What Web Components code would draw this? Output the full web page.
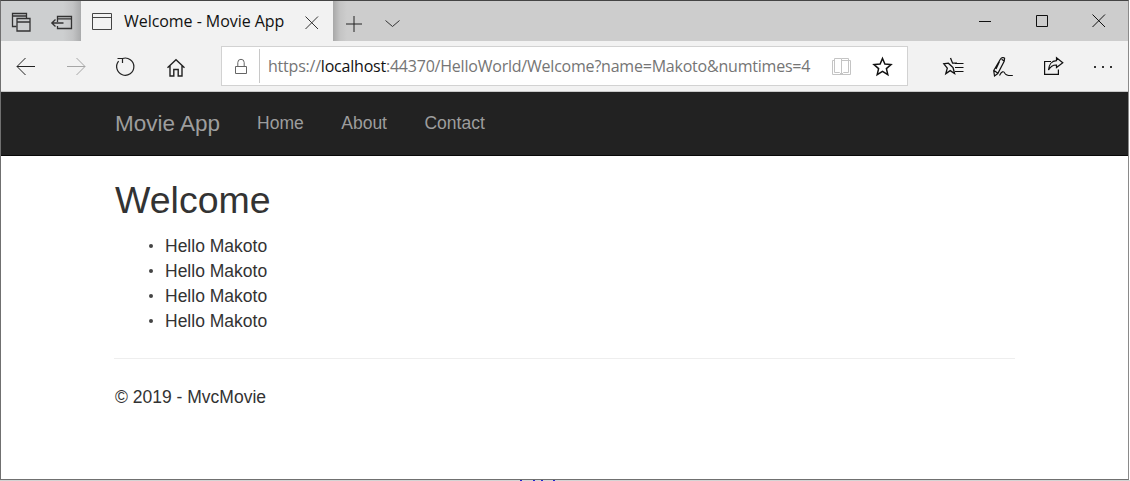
<!DOCTYPE html>
<html lang="en"><head><meta charset="utf-8"><title>Welcome - Movie App</title>
<style>
html,body{margin:0;padding:0;background:#fff;overflow:hidden}
body{width:1130px;height:481px;font-family:"Liberation Sans",Arial,sans-serif}
</style></head><body>
<browser-window>
  <tab-strip title-text="Welcome - Movie App"></tab-strip>
  <nav-toolbar url-a="https://" url-b="localhost" url-c=":44370/HelloWorld/Welcome?name=Makoto&amp;numtimes=4"></nav-toolbar>
  <site-navbar brand="Movie App">
    <nav-link>Home</nav-link><nav-link>About</nav-link><nav-link>Contact</nav-link>
  </site-navbar>
  <page-body>
    <span slot="heading">Welcome</span>
    <bullet-item>Hello Makoto</bullet-item><bullet-item>Hello Makoto</bullet-item><bullet-item>Hello Makoto</bullet-item><bullet-item>Hello Makoto</bullet-item>
    <span slot="footer">© 2019 - MvcMovie</span>
  </page-body>
</browser-window>
<script>
const ICONS={
 stack:'<path d="M4.5 13.5H.5V.5H14.5V5M.5 3H14.5"/><path d="M5 5.5H18V18H5ZM5 9H18"/>',
 backtab:'<path d="M6.5 6V.5H20.5V12.5H6.5V10M6.5 2.8H20.5"/><path d="M.8 7H12.5M4.5 3.5L.8 7L4.5 10.5"/>',
 tabpage:'<path d="M.5.5H19.5V16.5H.5ZM.5 4.5H19.5"/>',
 close:'<path d="M.5.5L13 13M13 .5L.5 13"/>',
 plus:'<path d="M8 0V16M0 8H16"/>',
 chev:'<path d="M.5.5L7.5 6.5L14.5.5"/>',
 min:'<path d="M0 .5H12"/>',
 max:'<path d="M.5.5H11.5V11.5H.5Z"/>',
 back:'<path d="M19 9.5H1M9.5 1L1 9.5L9.5 18"/>',
 refresh:'<path d="M5.5 .5A8.6 8.6 0 1 1 1.6 3.2" stroke-width="1.2"/><path d="M.5 .5H5.5V5" stroke-width="1.2"/>',
 home:'<path d="M.5 8.7L9 .7L17.5 8.7M3 6.8V17H6.8V10.5H11.2V17H15V6.8" stroke-width="1.4"/>',
 lock:'<path d="M2.8 7V3.5A3.2 3.2 0 0 1 9.2 3.5V7M.5 7.5H11.5V14.5H.5Z"/>',
 book:'<path d="M.5 2.5H2.5V.5H9.5V16.5H.5ZM9.5 2.5H18.5V16.5H9.5M16.5.5H9.5M16.5.5V14.5H11.5L9.5 16.5M2.5 2V14.5H7.5L9.5 16.5"/>',
 star:'<path d="M9.5 1.5L11.9 7.1L18 7.6L13.4 11.6L14.8 17.6L9.5 14.4L4.2 17.6L5.6 11.6L1 7.6L7.1 7.1Z" stroke-width="1.5"/>',
 favs:'<path d="M7.5 1L9.6 6.2H14M10 10.5L11.6 16.6L7.2 13.6L2.8 16.6L4.3 11.2L.8 6.8L5.4 6.2Z" stroke-width="1.3"/><path d="M12 6.5H20.5M12 10.5H20.5M12 14.5H20.5" stroke-width="1.2"/>',
 pen:'<path d="M1.5 19L.7 13.5L7.5 2C8.6 .4 10.6 .2 11.6 1.2L11.2 4.2L4.8 16.5ZM1 13.6L4.6 16M8.6 2.2L10.8 3.8M6.5 4.5L3 12" stroke-width="1.2"/><path d="M6.5 18.4C8.5 14.5 10.5 13.5 12 16.5C13.5 19 15.5 18.5 19.8 18.5" stroke-width="1.1"/>',
 share:'<path d="M7 4.5H.6V17.4H14.4V12.5" stroke-width="1.2"/><path d="M12.5 .8L18.8 5.8L12.5 10.6V8C9 7.8 6.5 9.5 4.5 13C4.8 8 7.5 3.8 12.5 3.6Z" stroke-width="1.2"/>'
};
const SIZES={stack:[18.5,18.5,18.5,18.5],backtab:[21,13,21,13],tabpage:[20,17,20,17],close:[14,14,14,14],plus:[16,16,16,16],chev:[15,7,15,7],min:[12,1,12,1],max:[12,12,12,12],back:[20,19,20,19],refresh:[18,19,18,19],home:[18,18,18,18],lock:[12,15,12,15],book:[19,17,19,17],star:[19,19,19,19],favs:[21,18,21,18],pen:[20,20,20,20],share:[19,18,19,18]};
class UiIcon extends HTMLElement{
 connectedCallback(){
  const n=this.getAttribute('name'),[vw,vh,w,h]=SIZES[n];
  const c=this.getAttribute('color')||'#111';
  const r=this.attachShadow({mode:'open'});
  r.innerHTML=`<style>:host{display:flex;align-items:center;justify-content:center}svg{display:block;overflow:visible}</style><svg width="${w}" height="${h}" viewBox="0 0 ${vw} ${vh}" fill="none" stroke="${c}" stroke-width="${n==='stack'||n==='backtab'?1.3:1}">${ICONS[n]}</svg>`;
 }
}
customElements.define('ui-icon',UiIcon);

class BrowserWindow extends HTMLElement{
 constructor(){super();this.attachShadow({mode:'open'}).innerHTML=`<style>
 :host{display:block;width:1130px;height:481px;box-sizing:border-box;position:relative;overflow:hidden}
 .frame{width:1129px;height:480px;box-sizing:border-box;border:1px solid #707070;border-top-color:#444;border-right-color:#8a8a8a;display:flex;flex-direction:column;background:#fff}
 .under{height:1px;background-color:#d4d4d4;background-repeat:no-repeat;background-size:2px 1px;
  background-image:linear-gradient(#22c,#22c),linear-gradient(#22c,#22c),linear-gradient(#22c,#22c),linear-gradient(#22c,#22c);
  background-position:520px 0,533px 0,541px 0,553px 0}
 </style><div class="frame"><slot></slot></div><div class="under"></div>`;}
}
customElements.define('browser-window',BrowserWindow);

class TabStrip extends HTMLElement{
 constructor(){super();const t=this.getAttribute('title-text');this.attachShadow({mode:'open'}).innerHTML=`<style>
 :host{display:flex;height:40px;background:#cdcdcd;flex:none}
 .left{width:80px;display:flex;background:linear-gradient(90deg,#cdcfd0 0,#cdcfd0 62px,#c2c3c4 72px,#a9aaab 80px)}
 .left ui-icon{width:40px;box-sizing:border-box}
 .left ui-icon:nth-child(1){padding:2px 0 0 0}
 .left ui-icon:nth-child(2){padding:3px 0 0 1px}
 .tab{width:252px;background:#f2f2f2;display:flex;align-items:center;font:16px "Open Sans","Noto Sans",sans-serif;color:#111;box-sizing:border-box}
 .tab .ti{width:20px;margin-left:11px}
 .tab span{margin-left:12px;flex:1;white-space:nowrap;letter-spacing:-.05px}
 .tab .x{width:14px;margin-right:14px;padding-top:3px}
 .add{width:39px;display:flex;justify-content:flex-start;background:linear-gradient(90deg,#a8a8a8 0,#c4c4c4 7px,#cdcdcd 14px,#cdcdcd 100%)}
 .add ui-icon{width:16px;margin-left:13px;padding-top:5px}
 .chev{width:40px;padding-top:4px}
 .sp{flex:1}
 .ctl{width:57px}
 .ctl.last{margin-right:1px}
 </style>
 <div class="left"><ui-icon name="stack" color="#333"></ui-icon><ui-icon name="backtab" color="#333"></ui-icon></div>
 <div class="tab"><ui-icon class="ti" name="tabpage" color="#444"></ui-icon><span>${t}</span><ui-icon class="x" name="close" color="#333"></ui-icon></div>
 <div class="add"><ui-icon name="plus" color="#222"></ui-icon></div>
 <ui-icon class="chev" name="chev" color="#333"></ui-icon>
 <div class="sp"></div>
 <ui-icon class="ctl" name="min" color="#111"></ui-icon><ui-icon class="ctl" name="max" color="#111"></ui-icon><ui-icon class="ctl last" name="close" color="#111"></ui-icon>`;}
}
customElements.define('tab-strip',TabStrip);

class NavToolbar extends HTMLElement{
 constructor(){super();const g=n=>this.getAttribute(n);this.attachShadow({mode:'open'}).innerHTML=`<style>
 :host{display:flex;height:51px;background:#f2f2f2;flex:none;box-sizing:border-box;border-bottom:1px solid #c9c9c9;align-items:flex-start}
 .btn{width:50px;height:50px;box-sizing:border-box}
 .gap{width:20px;flex:none}
 .addr{width:687px;height:40px;margin-top:5px;box-sizing:border-box;background:#fff;border:1px solid #d2d2d2;display:flex;align-items:center;position:relative}
 .lock{width:38px;height:34px;box-sizing:border-box;border-right:1px solid #c8c8c8;flex:none}
 .url{margin-left:8px;flex:1;font:16px "Open Sans","Noto Sans",sans-serif;color:#757575;white-space:nowrap;letter-spacing:-.215px;min-width:0}
 .url b{font-weight:400;color:#111}
 .book{width:19px;margin-right:22px}
 .star{width:19px;margin-right:15px}
 </style>
 <ui-icon class="btn" name="back" color="#222"></ui-icon>
 <ui-icon class="btn" name="back" color="#a6a6a6" style="transform:scaleX(-1)"></ui-icon>
 <ui-icon class="btn" name="refresh" color="#222" style="padding-top:2px"></ui-icon>
 <ui-icon class="btn" name="home" color="#222" style="padding-top:3px"></ui-icon>
 <div class="gap"></div>
 <div class="addr"><ui-icon class="lock" name="lock" color="#666"></ui-icon><div class="url">${g('url-a')}<b>${g('url-b')}</b>${g('url-c').replace(/&/g,'&amp;')}</div><ui-icon class="book" name="book" color="#c4c4c4"></ui-icon><ui-icon class="star" name="star" color="#111"></ui-icon></div>
 <div class="gap"></div>
 <ui-icon class="btn" name="favs" color="#111"></ui-icon>
 <ui-icon class="btn" name="pen" color="#111" style="padding-top:2px"></ui-icon>
 <ui-icon class="btn" name="share" color="#111"></ui-icon>
 <div class="btn dots" style="display:flex;align-items:center;justify-content:center;gap:6px;padding-top:1px"><i style="width:2px;height:2px;background:#333"></i><i style="width:2px;height:2px;background:#333"></i><i style="width:2px;height:2px;background:#333"></i></div>`;}
}
customElements.define('nav-toolbar',NavToolbar);

class SiteNavbar extends HTMLElement{
 constructor(){super();this.attachShadow({mode:'open'}).innerHTML=`<style>
 :host{display:flex;height:64px;box-sizing:border-box;background:#222;border-bottom:1px solid #080808;flex:none;align-items:center;padding-left:114px;font-family:"Liberation Sans",Arial,sans-serif}
 .brand{font-size:22.5px;color:#9d9d9d;margin-right:37px}
 .links{display:flex;gap:37.5px}
 </style><div class="brand">${this.getAttribute('brand')}</div><div class="links"><slot></slot></div>`;}
}
customElements.define('site-navbar',SiteNavbar);

class NavLink extends HTMLElement{
 constructor(){super();this.attachShadow({mode:'open'}).innerHTML=`<style>:host{display:block;font-size:17.5px;color:#9d9d9d}</style><slot></slot>`;}
}
customElements.define('nav-link',NavLink);

class BulletItem extends HTMLElement{
 constructor(){super();this.attachShadow({mode:'open'}).innerHTML=`<style>
 :host{display:flex;align-items:center}
 i{width:4px;height:4px;border-radius:50%;background:#444;margin-left:-16px;margin-right:12px;flex:none}
 </style><i></i><slot></slot>`;}
}
customElements.define('bullet-item',BulletItem);

class PageBody extends HTMLElement{
 constructor(){super();this.attachShadow({mode:'open'}).innerHTML=`<style>
 :host{display:block;width:901px;padding-left:113px;font:17.5px/25px "Liberation Sans",Arial,sans-serif;color:#333}
 h2{font-size:37.5px;line-height:41px;font-weight:500;margin:24px 0 12.5px 1px}
 .list{margin:0 0 12.5px;padding-left:51px}
 hr{border:0;border-top:1px solid #eee;margin:24px 0 26px}
 footer{margin-left:1px}
 </style><h2><slot name="heading"></slot></h2><div class="list"><slot></slot></div><hr><footer><slot name="footer"></slot></footer>`;}
}
customElements.define('page-body',PageBody);
</script>
</body></html>
